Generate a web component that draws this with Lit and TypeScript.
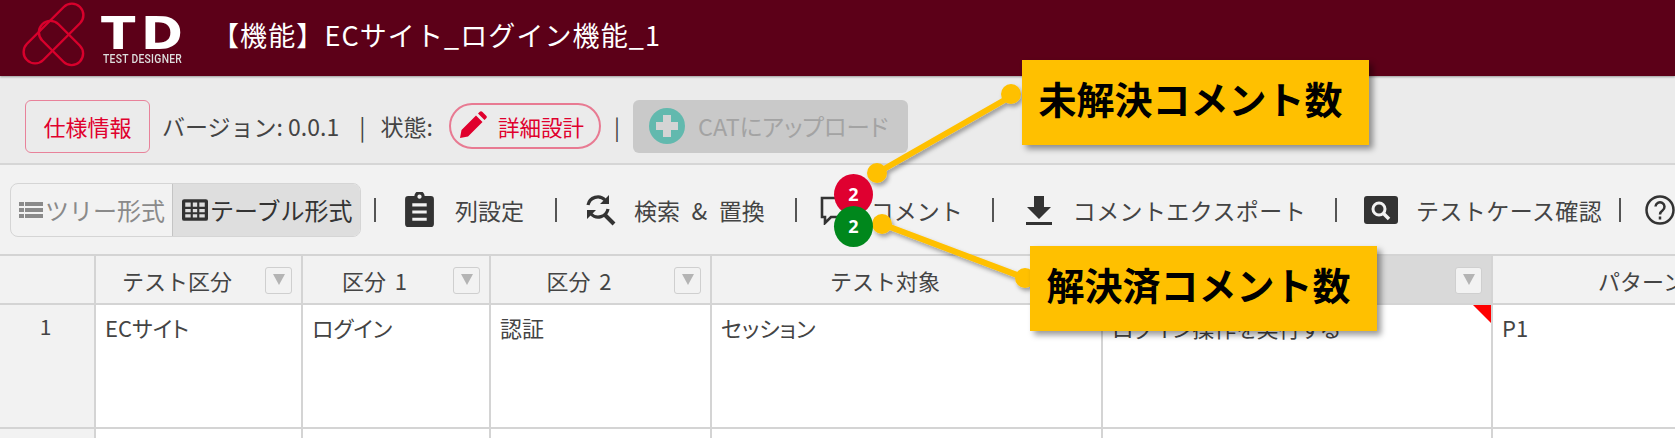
import { LitElement, html, css, svg, nothing } from "lit";
import { customElement } from "lit/decorators.js";

const cols = [
  { t: "テスト区分", f: true, v: "ECサイト" },
  { t: "区分 1", f: true, v: "ログイン" },
  { t: "区分 2", f: true, v: "認証" },
  { t: "テスト対象", f: false, v: "セッション" },
  { t: "", f: true, v: "ログイン操作を実行する", mark: true, hi: true },
  { t: "パターン", f: false, v: "P1", last: true },
];

@customElement("app-root")
export class AppRoot extends LitElement {
  static styles = css`
    :host {
      display: block;
      position: relative;
      width: 1675px;
      height: 438px;
      overflow: hidden;
      background: #fff;
      font-family: "Noto Sans CJK JP", "Noto Sans", sans-serif;
      color: #444;
    }
    .top {
      height: 76px;
      background: #5c0018;
      display: flex;
      align-items: center;
      box-shadow: 0 1px 2px rgba(0, 0, 0, 0.35);
      position: relative;
    }
    .logo { width: 80px; height: 76px; margin-left: 10px; flex: none; }
    .brand { margin-left: 11px; width: 90px; color: #fff; display: flex; flex-direction: column; align-items: flex-start; align-self: flex-start; padding-top: 17px; }
    .td { font: 700 45px/33px "DejaVu Sans", sans-serif; letter-spacing: 5px; height: 33px; transform: scaleX(1.12); transform-origin: left center; }
    .tdsub { font: 500 10.3px/12px "Roboto", sans-serif; letter-spacing: 0.3px; color: #ddd; transform: scaleY(1.2); margin: 3px 0 0 2px; white-space: nowrap; }
    .title { margin-left: 21px; color: #fff; font-size: 27px; letter-spacing: 1.1px; line-height: 36px; margin-top: -6px; white-space: nowrap; }
    .status {
      height: 89px;
      box-sizing: border-box;
      background: #ebebeb;
      border-bottom: 2px solid #d6d6d6;
      display: flex;
      align-items: center;
      padding: 13px 0 0 25px;
      font-size: 22px;
    }
    .spec {
      width: 125px; height: 53px; box-sizing: border-box;
      border: 1.5px solid #e8829a; border-radius: 6px;
      color: #e0002d; display: flex; align-items: center; justify-content: center;
    }
    .ver { margin-left: 12px; white-space: nowrap; width: 287px; font-size: 23px; flex: none; display: flex; }
    .ver .bar { margin: 0 15px 0 20px; }
    .pill {
      width: 152px; height: 46px; box-sizing: border-box;
      border: 2px solid #e87a92; border-radius: 23px;
      color: #e0002d; display: flex; align-items: center; gap: 11px; font-size: 21.5px; padding-left: 6px;
    }
    .pipe { color: #444; }
    .upload {
      margin-left: 13px; width: 275px; height: 53px; border-radius: 6px;
      background: #c9c9c9; color: #a3a3a3; display: flex; align-items: center; gap: 13px; padding-left: 16px; box-sizing: border-box;
      font-feature-settings: "palt"; font-size: 23.4px; white-space: nowrap;
    }
    .tools {
      height: 91px; box-sizing: border-box; background: #f2f2f2;
      border-bottom: 2px solid #d4d4d4;
      display: flex; align-items: center; padding-left: 10px; font-size: 23px;
    }
    .seg {
      display: flex; width: 351px; height: 54px; box-sizing: border-box;
      border: 1.5px solid #d5d5d5; border-radius: 8px; overflow: hidden; font-size: 24px; flex: none;
    }
    .seg > div { display: flex; align-items: center; white-space: nowrap; }
    .tree { width: 161px; color: #8a8a8a; padding-left: 8px; gap: 2px; box-sizing: border-box; }
    .table { flex: 1; background: #dedede; border-left: 1.5px solid #c4c4c4; color: #333; padding-left: 9px; gap: 2px; }
    .tool { display: flex; align-items: center; flex: none; white-space: nowrap; color: #333; }
    .tool span { color: #444; }
    .tool .wide { letter-spacing: 0.4px; }
    .tool .spaced { word-spacing: 6.4px; }
    .sep { flex: none; width: 2px; height: 24px; background: #555; }
    .grid {
      display: grid;
      grid-template-columns: 96px 207px 188px 221px 391px 390px 182px;
      grid-template-rows: 49px 124px 20px;
    }
    .c { box-sizing: border-box; border-right: 2px solid #d4d4d4; border-bottom: 2px solid #d4d4d4; position: relative; }
    .corner { background: #f2f2f2; }
    .th {
      background: #f2f2f2; font-size: 22px; display: flex; align-items: center; justify-content: center;
      padding-right: 43px; white-space: pre; word-spacing: 4px; overflow: hidden;
    }
    .th.hi { background: #d9d9d9; }
    .th.last { justify-content: flex-start; padding: 0 0 0 105px; border-right: 0; }
    .fbtn {
      position: absolute; right: 9px; top: 11px; width: 27px; height: 27px; box-sizing: border-box;
      border: 1.5px solid #cfcfcf; border-radius: 3px; background: #f2f2f2; display: flex; align-items: center; justify-content: center;
    }
    .fbtn::after { content: ""; border-left: 6px solid transparent; border-right: 6px solid transparent; border-top: 11px solid #b4b4b4; margin-top: -2px; }
    .rh { background: #f2f2f2; font-size: 21px; text-align: center; padding: 6px 3px 0 0; }
    .cell { font-size: 22px; font-feature-settings: "palt"; padding: 7px 9px 0; line-height: 30px; white-space: nowrap; }
    .cell.last { border-right: 0; }
    .mark { position: absolute; right: 0; top: 0; width: 0; height: 0; border-top: 18px solid #fe0000; border-left: 18px solid transparent; }
    .overlay { position: absolute; left: 0; top: 0; width: 1675px; height: 438px; pointer-events: none; }
    .badge {
      position: absolute; width: 39px; height: 41px; border-radius: 50%;
      color: #fff; font: 700 18px/41px "Noto Sans", sans-serif; text-align: center;
    }
    .red { left: 834px; top: 174px; background: #df0030; }
    .green { left: 834px; top: 206px; background: #00871c; }
    .call {
      position: absolute; background: #ffc000; color: #000; font-weight: 700; font-size: 38px;
      display: flex; align-items: center; justify-content: center;
      width: 347px; height: 85px; box-shadow: 4px 4px 6px rgba(0, 0, 0, 0.4); white-space: nowrap; padding: 0 10px 10px 0; box-sizing: border-box;
    }
    .c1 { left: 1022px; top: 60px; }
    .c2 { left: 1030px; top: 246px; }
  `;

  private logo() {
    return html`<svg class="logo" viewBox="10 0 80 76" fill="none" stroke="#d8002c" stroke-width="2.4">
      <rect x="-11.500" y="-37.500" width="23" height="75" rx="11.500" transform="translate(53.500 33.500) rotate(45)"></rect>
      <rect x="-11.500" y="-26.500" width="23" height="53" rx="11.500" transform="translate(61 43) rotate(-45)"></rect>
    </svg>`;
  }

  private icon(d: string, w: number, h: number, vb: string) {
    return html`<svg style="flex:none" width=${w} height=${h} viewBox=${vb}>${svg`<path d=${d} fill="currentColor" fill-rule="evenodd"></path>`}</svg>`;
  }

  render() {
    const listIcon = "M0 2h5v4H0zM6 2h18v4H6zM0 8h5v4H0zM6 8h18v4H6zM0 14h5v4H0zM6 14h18v4H6z";
    const gridIcon = "M2 0h20a2 2 0 0 1 2 2v16a2 2 0 0 1-2 2H2a2 2 0 0 1-2-2V2a2 2 0 0 1 2-2zM3 3v4h5V3zM10 3v4h4V3zM16 3v4h5V3zM3 9v3h5V9zM10 9v3h4V9zM16 9v3h5V9zM3 14v3h5v-3zM10 14v3h4v-3zM16 14v3h5v-3z";
    const clip = "M3 4h6a5 5 0 0 1 10 0h6a3 3 0 0 1 3 3v24a3 3 0 0 1-3 3H3a3 3 0 0 1-3-3V7a3 3 0 0 1 3-3zM14 2.500a2 2 0 1 0 .01 0zM7 11v3h14v-3zM7 18v3h14v-3zM7 25v3h14v-3z";
    return html`
      <div class="top">
        ${this.logo()}
        <div class="brand"><div class="td">TD</div><div class="tdsub">TEST DESIGNER</div></div>
        <div class="title">【機能】ECサイト_ログイン機能_1</div>
      </div>
      <div class="status">
        <div class="spec">仕様情報</div>
        <div class="ver"><span>バージョン: 0.0.1</span><span class="bar">|</span><span>状態:</span></div>
        <div class="pill">
          <svg width="30" height="30" viewBox="0 0 30 30"><path fill="#e0002d" d="M3 27l1.500-8L19 4.500l6.500 6.500L11 25.500zM21 2.500l1.500-1.500a2 2 0 0 1 3 0l3.500 3.500a2 2 0 0 1 0 3L27.500 9z"></path></svg>
          <span>詳細設計</span>
        </div>
        <div class="pipe" style="margin-left:13px">|</div>
        <div class="upload">
          <svg width="36" height="36" viewBox="0 0 36 36"><circle cx="18" cy="18" r="18" fill="#62b9ae"></circle><path fill="#d4d4d4" d="M14 7h8v7h7v8h-7v7h-8v-7H7v-8h7z"></path></svg>
          <span>CATにアップロード</span>
        </div>
      </div>
      <div class="tools">
        <div class="seg">
          <div class="tree">${this.icon(listIcon, 24, 20, "0 0 24 20")}ツリー形式</div>
          <div class="table">${this.icon(gridIcon, 26, 22, "0 0 24 20")}テーブル形式</div>
        </div>
        <div class="sep" style="margin-left:13px"></div>
        <div class="tool" style="margin-left:29px">
          ${this.icon(clip, 29, 35, "0 0 28 34")}<span style="margin-left:21px">列設定</span>
        </div>
        <div class="sep" style="margin-left:31px"></div>
        <div class="tool" style="margin-left:28px">
          <svg width="31" height="34" viewBox="0 0 31 34" fill="none" stroke="currentColor" stroke-width="3.200">
            <path d="M3 12a10 10 0 0 1 17-5"></path>
            <path d="M23 16a10 10 0 0 1-17 5"></path>
            <path d="M24 2v9h-9zM2 26v-9h9z" fill="currentColor" stroke="none"></path>
            <path d="M20 22l9 9" stroke-width="4"></path>
          </svg>
          <span class="spaced" style="margin-left:18px">検索 &amp; 置換</span>
        </div>
        <div class="sep" style="margin-left:30px"></div>
        <div class="tool" style="margin-left:23px">
          <svg width="36" height="30" viewBox="0 0 36 30" fill="none" stroke="currentColor" stroke-width="2.600"><path d="M2 3h32v19H11l-6 6v-6H2z"></path></svg>
          <span style="margin-left:15px">コメント</span>
        </div>
        <div class="sep" style="margin-left:29px"></div>
        <div class="tool" style="margin-left:30px">
          <svg width="30" height="32" viewBox="0 0 30 32"><path fill="currentColor" d="M10 2h10v11h7L15 25 3 13h7zM2 28h26v3H2z"></path></svg>
          <span class="wide" style="margin-left:19px">コメントエクスポート</span>
        </div>
        <div class="sep" style="margin-left:29px"></div>
        <div class="tool" style="margin-left:27px">
          <svg width="34" height="28" viewBox="0 0 34 28"><rect width="34" height="28" rx="3" fill="#333"></rect><circle cx="15" cy="13" r="6" fill="none" stroke="#f2f2f2" stroke-width="3"></circle><path d="M19 17l6 6" stroke="#f2f2f2" stroke-width="3.500"></path></svg>
          <span class="wide" style="margin-left:18px">テストケース確認</span>
        </div>
        <div class="sep" style="margin-left:17px"></div>
        <div class="tool" style="margin-left:24px">
          <svg width="30" height="30" viewBox="0 0 30 30" fill="none" stroke="currentColor" stroke-width="2.500"><circle cx="15" cy="15" r="13.500"></circle><path d="M10.500 11.500a4.500 4.500 0 1 1 7 4c-1.500 1-2.500 2-2.500 4"></path><path d="M15 21.500v3"></path></svg>
        </div>
      </div>
      <div class="grid">
        <div class="c corner"></div>
        ${cols.map(
          (c) => html`<div class="c th ${c.hi ? "hi" : ""} ${c.last ? "last" : ""}">${c.t}${c.f ? html`<span class="fbtn"></span>` : nothing}</div>`
        )}
        <div class="c rh">1</div>
        ${cols.map(
          (c) => html`<div class="c cell ${c.last ? "last" : ""}">${c.v}${c.mark ? html`<span class="mark"></span>` : nothing}</div>`
        )}
        <div class="c rh"></div>
        ${cols.map((c) => html`<div class="c cell ${c.last ? "last" : ""}"></div>`)}
      </div>
      <svg class="overlay" viewBox="0 0 1675 438">
        <defs><filter id="s" x="-10%" y="-10%" width="120%" height="130%"><feDropShadow dx="2" dy="3" stdDeviation="2" flood-color="#000" flood-opacity=".35"></feDropShadow></filter></defs>
        <g fill="#ffc000" stroke="#ffc000" filter="url(#s)">
          <path d="M877 173L1015 94" stroke-width="6"></path>
          <circle cx="877" cy="173" r="10" stroke="none"></circle>
          <circle cx="1011" cy="94" r="10" stroke="none"></circle>
          <path d="M882 224L1025 278" stroke-width="6"></path>
          <circle cx="882" cy="224" r="10" stroke="none"></circle>
          <circle cx="1025" cy="278" r="10" stroke="none"></circle>
        </g>
      </svg>
      <div class="badge red">2</div>
      <div class="badge green">2</div>
      <div class="call c1">未解決コメント数</div>
      <div class="call c2">解決済コメント数</div>
    `;
  }
}
